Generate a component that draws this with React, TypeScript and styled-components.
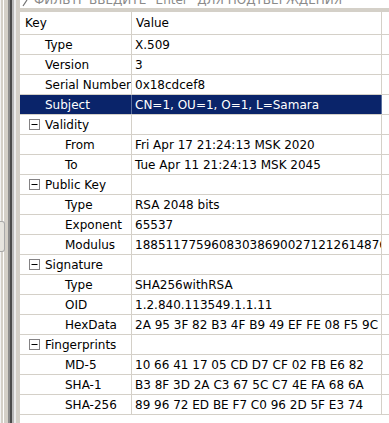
import React from "react";
import styled, { createGlobalStyle } from "styled-components";

const GlobalStyle = createGlobalStyle`
  html, body { margin: 0; padding: 0; background: #ffffff; }
  body { font-family: "DejaVu Sans", Verdana, sans-serif; font-size: 12px; color: #000; }
`;

const Page = styled.div`
  display: flex;
  width: 389px;
  height: 423px;
  overflow: hidden;
  background: #ffffff;
`;

const LeftFrame = styled.div`
  position: relative;
  display: flex;
  flex: 0 0 auto;
  height: 100%;
`;

const Stripe = styled.div<{ $w: number; $c: string }>`
  width: ${(p) => p.$w}px;
  height: 100%;
  background: ${(p) => p.$c};
`;

const SplitterTab = styled.div`
  position: absolute;
  left: 0;
  top: 221px;
  width: 4px;
  height: 29px;
  background: #e6e4de;
  border: 1px solid #a8a8a8;
  border-left: none;
  border-radius: 0 3px 3px 0;
`;

const Main = styled.div`
  flex: 1;
  display: flex;
  flex-direction: column;
  min-width: 0;
`;

const FilterBox = styled.div`
  height: 8px;
  overflow: hidden;
  display: flex;
  align-items: flex-end;
  gap: 6px;
  padding-left: 2px;
  color: #8a8a8a;
  white-space: nowrap;
`;

const FilterText = styled.span`
  line-height: 16px;
  font-size: 12px;
`;

const Band = styled.div`
  height: 4px;
  background: #d4d0c8;
`;

const Row = styled.div<{ $header?: boolean }>`
  display: grid;
  grid-template-columns: 112px 250px 1fr;
  height: ${(p) => (p.$header ? 23 : 20)}px;
  border-bottom: 1px solid #d4d0c8;
  box-sizing: border-box;
`;

const Cell = styled.div<{ $selected?: boolean; $pad: number; $divider?: boolean }>`
  display: flex;
  align-items: center;
  gap: 5px;
  padding-left: ${(p) => p.$pad}px;
  border-right: ${(p) => (p.$divider ? `1px solid ${p.$selected ? "#5a6f9e" : "#d4d0c8"}` : "none")};
  background: ${(p) => (p.$selected ? "#0a246a" : "transparent")};
  color: ${(p) => (p.$selected ? "#ffffff" : "#000000")};
  white-space: nowrap;
  overflow: hidden;
  box-sizing: border-box;
  min-width: 0;
`;

const Expander = () => (
  <svg width="11" height="11" viewBox="0 0 11 11" style={{ flex: "0 0 auto" }}>
    <rect x="0.5" y="0.5" width="10" height="10" fill="#ffffff" stroke="#848284" />
    <line x1="2.5" y1="5.5" x2="8.5" y2="5.5" stroke="#000000" strokeWidth="1" />
  </svg>
);

const Pencil = () => (
  <svg width="6" height="8" viewBox="0 0 6 8" style={{ flex: "0 0 auto", marginBottom: 1 }}>
    <line x1="1" y1="7" x2="5" y2="1" stroke="#707070" strokeWidth="1.2" />
  </svg>
);

type Item = { key: string; value?: string; level: 1 | 2; group?: boolean; selected?: boolean };

const items: Item[] = [
  { key: "Type", value: "X.509", level: 1 },
  { key: "Version", value: "3", level: 1 },
  { key: "Serial Number", value: "0x18cdcef8", level: 1 },
  { key: "Subject", value: "CN=1, OU=1, O=1, L=Samara", level: 1, selected: true },
  { key: "Validity", level: 1, group: true },
  { key: "From", value: "Fri Apr 17 21:24:13 MSK 2020", level: 2 },
  { key: "To", value: "Tue Apr 11 21:24:13 MSK 2045", level: 2 },
  { key: "Public Key", level: 1, group: true },
  { key: "Type", value: "RSA 2048 bits", level: 2 },
  { key: "Exponent", value: "65537", level: 2 },
  { key: "Modulus", value: "188511775960830386900271212614876543210987", level: 2 },
  { key: "Signature", level: 1, group: true },
  { key: "Type", value: "SHA256withRSA", level: 2 },
  { key: "OID", value: "1.2.840.113549.1.1.11", level: 2 },
  { key: "HexData", value: "2A 95 3F 82 B3 4F B9 49 EF FE 08 F5 9C 1D 7A 33", level: 2 },
  { key: "Fingerprints", level: 1, group: true },
  { key: "MD-5", value: "10 66 41 17 05 CD D7 CF 02 FB E6 82", level: 2 },
  { key: "SHA-1", value: "B3 8F 3D 2A C3 67 5C C7 4E FA 68 6A", level: 2 },
  { key: "SHA-256", value: "89 96 72 ED BE F7 C0 96 2D 5F E3 74", level: 2 },
];

const stripes: [number, string][] = [
  [1, "#f2f2f2"],
  [2, "#d4d0c8"],
  [1, "#ffffff"],
  [4, "#d4d0c8"],
  [2, "#8c8c8c"],
  [2, "#4a4a4a"],
  [2, "#b8b8b8"],
  [2, "#ececec"],
  [4, "#d4d0c8"],
];

export default function App() {
  return (
    <>
      <GlobalStyle />
      <Page>
        <LeftFrame>
          {stripes.map(([w, c], i) => (
            <Stripe key={i} $w={w} $c={c} />
          ))}
          <SplitterTab />
        </LeftFrame>
        <Main>
          <FilterBox>
            <Pencil />
            <FilterText>ФИЛЬТР ВВЕДИТЕ "Enter" ДЛЯ ПОДТВЕРЖДЕНИЯ</FilterText>
          </FilterBox>
          <Band />
          <Row $header>
            <Cell $pad={5} $divider>Key</Cell>
            <Cell $pad={4} $divider>Value</Cell>
            <Cell $pad={0} />
          </Row>
          {items.map((it, i) => (
            <Row key={i}>
              <Cell $pad={it.group ? 9 : it.level === 1 ? 25 : 45} $divider $selected={it.selected}>
                {it.group && <Expander />}
                {it.key}
              </Cell>
              <Cell $pad={3} $divider $selected={it.selected}>
                {it.value ?? ""}
              </Cell>
              <Cell $pad={0} />
            </Row>
          ))}
        </Main>
      </Page>
    </>
  );
}
